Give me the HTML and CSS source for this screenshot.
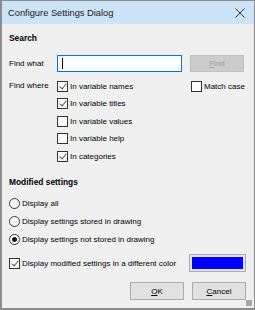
FILE: index.html
```html
<!DOCTYPE html>
<html lang="en">

<head>
    <meta charset="UTF-8">
    <title>Configure Settings Dialog</title>
    <link rel="stylesheet" href="styles.css">
</head>

<body>
    <div class="dialog">

        <!-- TITLE BAR -->
        <div class="titlebar">
            <span class="title">Configure Settings Dialog</span>
            <svg class="close" width="10" height="10" viewBox="0 0 10 10">
                <path d="M0.5 0.5 L9.5 9.5 M9.5 0.5 L0.5 9.5" stroke="#333" stroke-width="1" fill="none" />
            </svg>
        </div>

        <div class="content">
            <div class="heading">Search</div>

            <!-- FIND WHAT -->
            <div class="row find-row">
                <span class="label">Find what</span>
                <div class="input"><span class="caret"></span></div>
                <button class="btn disabled"><u>F</u>ind</button>
            </div>

            <!-- FIND WHERE -->
            <div class="row where-row">
                <span class="label">Find where</span>
                <div class="options">
                    <label class="check"><span class="box checked"></span>In variable names</label>
                    <label class="check"><span class="box checked"></span>In variable titles</label>
                    <label class="check"><span class="box"></span>In variable values</label>
                    <label class="check"><span class="box"></span>In variable help</label>
                    <label class="check"><span class="box checked"></span>In categories</label>
                </div>
                <label class="check match"><span class="box"></span>Match case</label>
            </div>

            <div class="heading modified">Modified settings</div>

            <div class="radios">
                <label class="radio"><span class="circle"></span>Display all</label>
                <label class="radio"><span class="circle"></span>Display settings stored in drawing</label>
                <label class="radio"><span class="circle selected"></span>Display settings not stored in drawing</label>
            </div>

            <div class="row color-row">
                <label class="check"><span class="box checked"></span>Display modified settings in a different color</label>
                <div class="swatch"><span></span></div>
            </div>

            <div class="buttons">
                <button class="btn"><u>O</u>K</button>
                <button class="btn"><u>C</u>ancel</button>
            </div>
        </div>

        <div class="grip"></div>
    </div>
</body>

</html>
```

FILE: styles.css
```css
body {
    margin: 0;
    font-family: "Liberation Sans", Arial, sans-serif;
    font-size: 8px;
    color: #000;
}

.dialog {
    position: relative;
    width: 255px;
    height: 310px;
    box-sizing: border-box;
    border: 1px solid #8c8c8c;
    border-left-width: 2px;
    border-bottom-width: 2px;
    background-color: #f0f0f0;
}

.titlebar {
    height: 23px;
    display: flex;
    align-items: center;
    justify-content: space-between;
    padding: 0 9px 0 6px;
    background-color: #cce4f7;
}

.title {
    font-size: 9.3px;
    color: #1a1a1a;
}

.content {
    padding: 0 8px 0 7px;
}

.heading {
    font-weight: bold;
    font-size: 8.4px;
    height: 14px;
    line-height: 14px;
    margin-top: 7px;
}

.row {
    display: flex;
}

.label {
    width: 48px;
    flex-shrink: 0;
}

.find-row {
    align-items: center;
    margin-top: 9px;
    height: 19px;
}

.input {
    height: 17px;
    width: 125px;
    border: 1px solid #0078d7;
    background-color: #fff;
    display: flex;
    align-items: center;
    padding-left: 4px;
    box-sizing: border-box;
}

.caret {
    width: 1px;
    height: 11px;
    background-color: #000;
}

.btn {
    width: 54px;
    height: 18px;
    border: 1px solid #adadad;
    background-color: #e1e1e1;
    font-family: inherit;
    font-size: 8px;
    padding: 0;
    color: #000;
}

.find-row .btn {
    margin-left: 8px;
    height: 17px;
}

.btn.disabled {
    background-color: #cccccc;
    border-color: #bfbfbf;
    color: #a0a0a0;
}

.where-row {
    margin-top: 7px;
}

.where-row .label {
    line-height: 12px;
}

.options {
    display: flex;
    flex-direction: column;
    gap: 5.5px;
    width: 134px;
}

.check,
.radio {
    display: flex;
    align-items: center;
    height: 12px;
    white-space: nowrap;
}

.box {
    width: 11px;
    height: 11px;
    box-sizing: border-box;
    border: 1px solid #333;
    background-color: #fff;
    margin-right: 2px;
    position: relative;
}

.box.checked::after {
    content: "";
    position: absolute;
    left: 3px;
    top: 0px;
    width: 3px;
    height: 6px;
    border-right: 1px solid #555;
    border-bottom: 1px solid #555;
    transform: rotate(40deg);
}

.modified {
    margin-top: 13px;
}

.radios {
    display: flex;
    flex-direction: column;
    gap: 6px;
    margin-top: 8px;
}

.circle {
    width: 11px;
    height: 11px;
    box-sizing: border-box;
    border: 1px solid #333;
    border-radius: 50%;
    background-color: #fff;
    margin-right: 2px;
    display: flex;
    align-items: center;
    justify-content: center;
}

.circle.selected::after {
    content: "";
    width: 5px;
    height: 5px;
    border-radius: 50%;
    background-color: #1a1a1a;
}

.color-row {
    justify-content: space-between;
    align-items: center;
    margin-top: 9px;
}

.swatch {
    width: 57px;
    height: 18px;
    box-sizing: border-box;
    border: 1px solid #adadad;
    background-color: #e1e1e1;
    padding: 2px;
}

.swatch span {
    display: block;
    height: 100%;
    background-color: #0000ff;
}

.buttons {
    display: flex;
    justify-content: flex-end;
    gap: 8px;
    margin-top: 10px;
}

.grip {
    position: absolute;
    right: 2px;
    bottom: 2px;
    width: 6px;
    height: 6px;
    background-image: radial-gradient(circle, #a0a0a0 0.7px, transparent 0.8px);
    background-size: 2px 2px;
}
```
